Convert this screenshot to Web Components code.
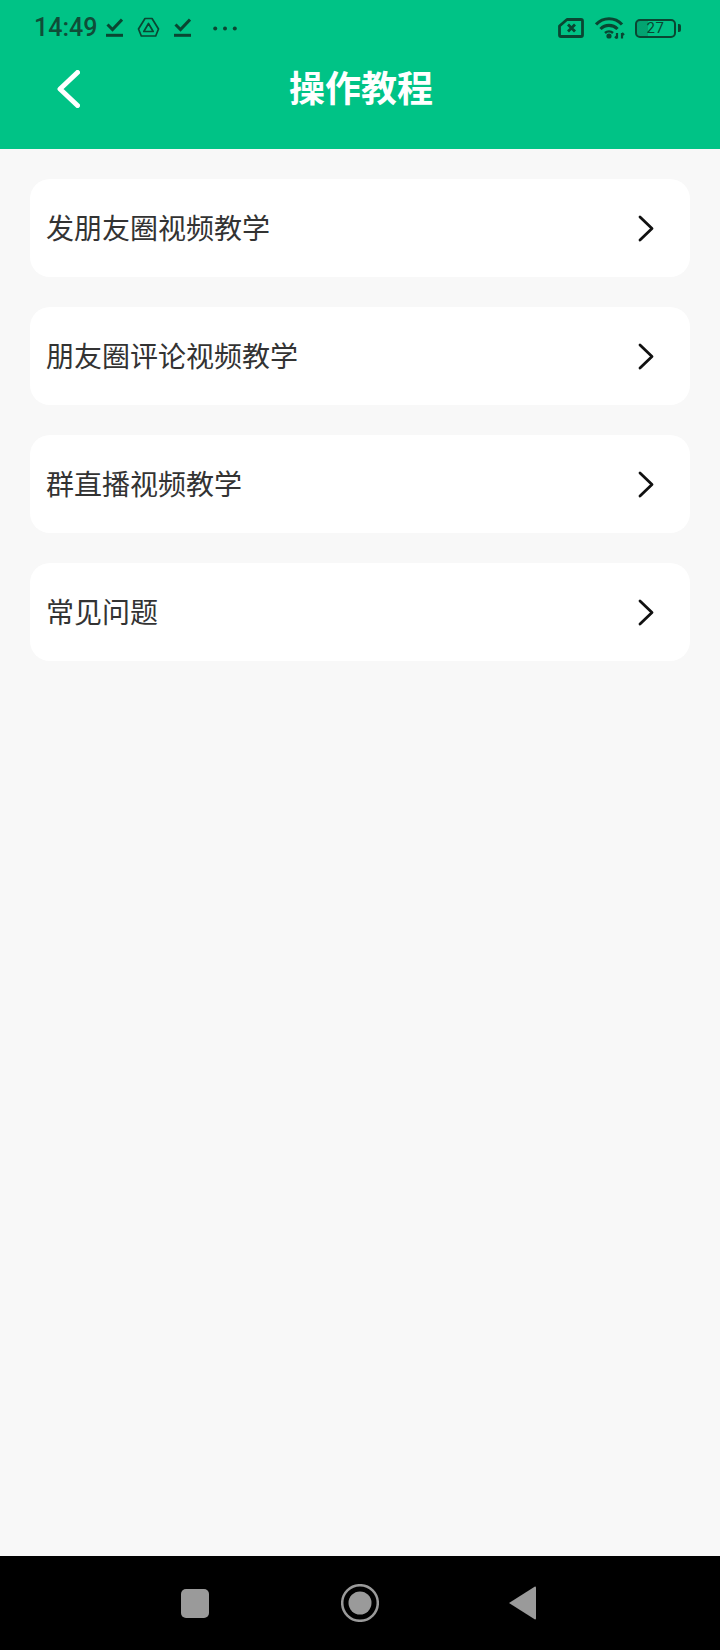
<!DOCTYPE html>
<html lang="zh-CN">
<head>
<meta charset="utf-8">
<title>操作教程</title>
<style>
  html, body { margin: 0; padding: 0; }
  body { font-family: Roboto, "Noto Sans CJK SC", sans-serif; background: #f8f8f8; }
</style>
</head>
<body>
<tutorial-page>
  <app-header slot="header" title-text="操作教程"></app-header>
  <menu-row>发朋友圈视频教学</menu-row>
  <menu-row>朋友圈评论视频教学</menu-row>
  <menu-row>群直播视频教学</menu-row>
  <menu-row>常见问题</menu-row>
  <nav-bar slot="nav"></nav-bar>
</tutorial-page>

<script>
class TutorialPage extends HTMLElement {
  constructor() {
    super();
    this.attachShadow({ mode: 'open' });
    this.shadowRoot.innerHTML = `
      <style>
        :host { display: flex; flex-direction: column; height: 1650px; background: #f8f8f8; }
        .list { flex: 1; display: flex; flex-direction: column; gap: 30px; padding: 30px 30px 0; }
      </style>
      <slot name="header"></slot>
      <div class="list"><slot></slot></div>
      <slot name="nav"></slot>
    `;
  }
}

class StatusBar extends HTMLElement {
  constructor() {
    super();
    this.attachShadow({ mode: 'open' });
    const check = (left) => `<svg style="margin-left:${left}px;margin-top:-2px" width="17" height="19" viewBox="0 0 17 19" fill="none" stroke="#0a4632" stroke-width="3">
      <path d="M1.500 6.500l5 5L16 1.500"/><path d="M0 17.300h17"/></svg>`;
    this.shadowRoot.innerHTML = `
      <style>
        :host { display: flex; align-items: center; justify-content: space-between; height: 56px; padding: 0 39px 0 34px; color: #0f4d38; }
        .side { display: flex; align-items: center; }
        .time { font: 500 25px/30px Roboto, sans-serif; margin-right: 9px; }
        svg { display: block; flex: none; }
        .batt { display: flex; align-items: center; margin-left: 10px; }
        .nub { width: 3px; height: 8px; margin-left: 2px; border-radius: 0 2px 2px 0; background: #0a4632; }
      </style>
      <div class="side">
        <span class="time">14:49</span>
        ${check(0)}
        <svg style="margin-left:14px;margin-top:-1px" width="23" height="21" viewBox="0 0 23 21" fill="none" stroke="#0a4632" stroke-width="1.700" stroke-linejoin="round">
          <path d="M8 1.500h7l6.500 10.500-2.800 7H4.300L1.500 12z"/><path d="M11.500 6.500l4.700 8H6.800z"/></svg>
        <svg style="margin-left:14px;margin-top:-2px" width="17" height="19" viewBox="0 0 17 19" fill="none" stroke="#0a4632" stroke-width="3">
          <path d="M1.500 6.500l5 5L16 1.500"/><path d="M0 17.300h17"/></svg>
        <svg style="margin-left:22px" width="24" height="5" viewBox="0 0 24 5" fill="#0a4632">
          <circle cx="2.200" cy="2.500" r="2"/><circle cx="12" cy="2.500" r="2"/><circle cx="21.800" cy="2.500" r="2"/></svg>
      </div>
      <div class="side">
        <svg width="26" height="20" viewBox="0 0 26 20" fill="none" stroke="#0a4632" stroke-width="2.800" stroke-linejoin="round">
          <path d="M9 1.500h14a1.500 1.500 0 0 1 1.500 1.500v14a1.500 1.500 0 0 1-1.500 1.500H3A1.500 1.500 0 0 1 1.500 17V8z"/>
          <path d="M10 6.500l7 7M17 6.500l-7 7"/></svg>
        <svg style="margin-left:11px;margin-top:-2px" width="30" height="23" viewBox="0 0 30 23" fill="none" stroke="#0a4632" stroke-width="3.200">
          <path d="M1 8.500C8 .8 20 .8 27 8.500"/>
          <path d="M5.500 13c4.700-4.800 12.300-4.800 17 0"/>
          <path d="M10 17c2.300-2 5.700-2 8 0" stroke-width="2.600"/>
          <circle cx="14" cy="20" r="2.600" fill="#0a4632" stroke="none"/>
          <path d="M22 17v5.500M20 20.500l2 2M27 22.500V17M27 17l2 2" stroke-width="2.200"/></svg>
        <span class="batt">
          <bat-level level="27"></bat-level>
          <span class="nub"></span>
        </span>
      </div>
    `;
  }
}

class BatLevel extends HTMLElement {
  constructor() {
    super();
    this.attachShadow({ mode: 'open' });
    this.shadowRoot.innerHTML = `
      <style>
        :host { display: flex; align-items: center; justify-content: center; box-sizing: border-box; width: 41px; height: 19px;
                border: 2px solid #0a4632; border-radius: 5px; overflow: hidden; color: #0a4632;
                font: 400 15px/15px Roboto, sans-serif; letter-spacing: .5px;
                background: linear-gradient(90deg, rgba(10,70,50,.25) 0 11px, transparent 11px); }
      </style>
      <span>${this.getAttribute('level') || ''}</span>
    `;
  }
}

class AppHeader extends HTMLElement {
  constructor() {
    super();
    this.attachShadow({ mode: 'open' });
    this.shadowRoot.innerHTML = `
      <style>
        :host { display: block; height: 149px; background: #00c386; }
        .bar { display: flex; align-items: center; height: 69px; margin-top: -3px; padding-left: 57px; }
        h1 { margin: 0 0 4px 209px; font: 700 36px/50px "Noto Sans CJK SC", sans-serif; color: #fff; }
        svg { display: block; flex: none; margin-top: 3px; }
      </style>
      <status-bar></status-bar>
      <div class="bar">
        <svg width="23" height="38" viewBox="0 0 23 38" fill="none" stroke="#fff" stroke-width="5" stroke-linecap="round" stroke-linejoin="round">
          <path d="M20.500 2.500L3 19l17.500 16.500"/></svg>
        <h1>${this.getAttribute('title-text')}</h1>
      </div>
    `;
  }
}

class MenuRow extends HTMLElement {
  constructor() {
    super();
    this.attachShadow({ mode: 'open' });
    this.shadowRoot.innerHTML = `
      <style>
        :host { display: flex; align-items: center; justify-content: space-between; height: 98px; padding: 0 36px 0 16px;
                background: #fff; border-radius: 20px; color: #333;
                font: 400 28px/40px "Noto Sans CJK SC", sans-serif; }
        span { margin-bottom: 2px; }
        svg { display: block; flex: none; }
      </style>
      <span><slot></slot></span>
      <svg width="16" height="27" viewBox="0 0 16 27" fill="none" stroke="#111" stroke-width="2.800" stroke-linecap="round" stroke-linejoin="round">
        <path d="M2 2l12 11.500L2 25"/></svg>
    `;
  }
}

class NavBar extends HTMLElement {
  constructor() {
    super();
    this.attachShadow({ mode: 'open' });
    this.shadowRoot.innerHTML = `
      <style>
        :host { display: flex; align-items: center; height: 94px; padding-left: 181px; background: #000; }
        svg { display: block; flex: none; }
      </style>
      <svg width="28" height="29" viewBox="0 0 28 29"><rect width="28" height="29" rx="5" fill="#9a9a9a"/></svg>
      <svg style="margin-left:132px" width="38" height="38" viewBox="0 0 38 38">
        <circle cx="19" cy="19" r="17.800" fill="none" stroke="#9a9a9a" stroke-width="2.500"/>
        <circle cx="19" cy="19" r="11.500" fill="#9a9a9a"/></svg>
      <svg style="margin-left:130px" width="27" height="34" viewBox="0 0 27 34">
        <path d="M26 0.500a1 1 0 0 1 1 1v31a1 1 0 0 1-1 1L0 17z" fill="#9a9a9a"/></svg>
    `;
  }
}

customElements.define('bat-level', BatLevel);
customElements.define('status-bar', StatusBar);
customElements.define('app-header', AppHeader);
customElements.define('menu-row', MenuRow);
customElements.define('nav-bar', NavBar);
customElements.define('tutorial-page', TutorialPage);
</script>
</body>
</html>
